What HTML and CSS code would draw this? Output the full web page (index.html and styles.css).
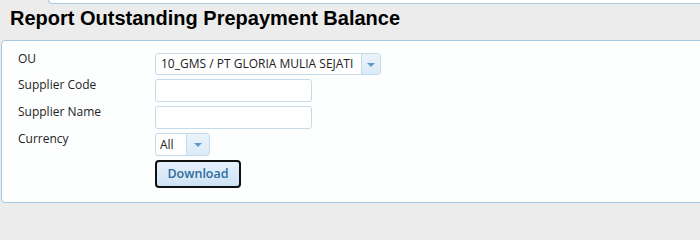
FILE: index.html
```html
<!DOCTYPE html>
<html>
<head>
<meta charset="utf-8">
<link rel="stylesheet" href="styles.css">
</head>
<body>
<div class="page">
  <div class="topbar"></div>
  <h1 class="title">Report Outstanding Prepayment Balance</h1>
  <div class="panel">
    <div class="row row-first">
      <span class="label">OU</span>
      <div class="select select-ou"><span class="value">10_GMS / PT GLORIA MULIA SEJATI</span><span class="arrow"><span class="tri"></span></span></div>
    </div>
    <div class="row">
      <span class="label">Supplier Code</span>
      <input class="text" type="text">
    </div>
    <div class="row">
      <span class="label">Supplier Name</span>
      <input class="text" type="text">
    </div>
    <div class="row">
      <span class="label">Currency</span>
      <div class="select select-cur"><span class="value">All</span><span class="arrow"><span class="tri"></span></span></div>
    </div>
    <div class="row row-btn">
      <span class="label"></span>
      <button class="btn" type="button">Download</button>
    </div>
  </div>
</div>
</body>
</html>
```

FILE: styles.css
```css
html, body {
  margin: 0;
  padding: 0;
  background: #ececec;
  overflow: hidden;
}
.page {
  width: 700px;
  height: 210px;
  background: #ececec;
  font-family: "Open Sans", "Noto Sans", sans-serif;
  font-size: 12px;
  color: #222;
}
.topbar {
  margin-left: 48px;
  height: 3px;
  background: #fff;
  border: 1px solid #a6c9e2;
  border-top: none;
  border-bottom-left-radius: 4px;
  margin-right: -10px;
}
.title {
  margin: 3px 0 10px 10px;
  font-family: "Liberation Sans", Arial, sans-serif;
  font-size: 20px;
  line-height: 23px;
  font-weight: bold;
  color: #000;
}
.panel {
  margin-left: 1px;
  margin-right: -10px;
  border: 1px solid #a6c9e2;
  border-radius: 4px;
  background: #fdfefe;
  padding: 10px 0 14px 16px;
}
.row {
  display: flex;
  align-items: flex-start;
  height: 27px;
}
.row-first { height: 26px; }
.row-btn { height: 30px; }
.label {
  width: 137px;
  flex: none;
  line-height: 16px;
  color: #222;
}
.select, .text, .btn { margin-top: 2px; }
.select {
  box-sizing: border-box;
  display: flex;
  border: 1px solid #c5dbec;
  border-radius: 3px;
  background: #fff;
  overflow: hidden;
}
.select-ou { width: 226px; height: 22px; }
.select-cur { width: 55px; height: 23px; }
.select .value {
  flex: 1;
  padding-left: 5px;
  line-height: 20px;
  color: #222;
  white-space: nowrap;
  overflow: hidden;
}
.select-cur .value { line-height: 21px; padding-left: 4px; }
.select .arrow {
  width: 18px;
  flex: none;
  border-left: 1px solid #c5dbec;
  background: linear-gradient(#eaf3fb, #dcebf8);
  display: flex;
  align-items: center;
  justify-content: center;
}
.select-cur .arrow { width: 22px; }
.tri {
  width: 0;
  height: 0;
  border-left: 4px solid transparent;
  border-right: 4px solid transparent;
  border-top: 4px solid #5b9bd0;
  margin-top: 1px;
}
.text {
  box-sizing: border-box;
  width: 157px;
  height: 23px;
  border: 1px solid #c5dbec;
  border-radius: 3px;
  background: #fff;
  padding: 0;
  outline: none;
}
.btn {
  box-sizing: border-box;
  width: 86px;
  height: 28px;
  border: 2px solid #111;
  border-radius: 4px;
  background: linear-gradient(#e6f1fc, #cfe3f5);
  color: #2e6e9e;
  font-family: "Open Sans", "Noto Sans", sans-serif;
  font-size: 12.5px;
  font-weight: 600;
  padding: 0;
  line-height: 22px;
}
```
